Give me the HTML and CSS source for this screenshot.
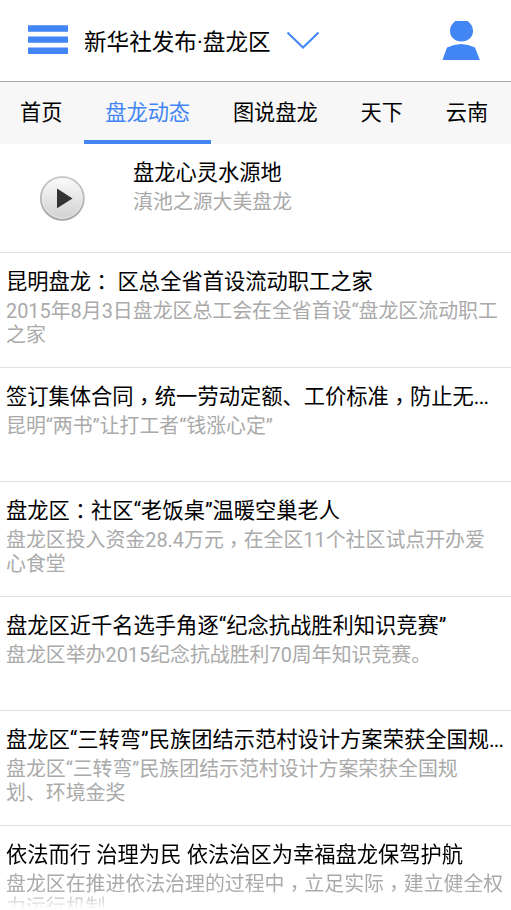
FILE: index.html
```html
<!DOCTYPE html>
<html lang="zh-CN">
<head>
<meta charset="utf-8">
<title>新华社发布·盘龙区</title>
<link rel="stylesheet" href="styles.css">
</head>
<body>
<header class="topbar">
<svg class="menu" width="40" height="29" viewBox="0 0 40 29"><path fill="#4285f4" d="M0 .3h40v6.500H0zM0 11.500h40v6.300H0zM0 22.600h40v6.300H0z"/></svg>
<h1 class="brand">新华社发布·盘龙区</h1>
<svg class="chevron" width="34" height="20" viewBox="0 0 34 20"><path d="M1.500 1.500L17 16.500 32.500 1.500" fill="none" stroke="#4285f4" stroke-width="2"/></svg>
<svg class="user" width="38" height="39" viewBox="0 0 38 39"><path fill="#4285f4" d="M13.500 0h12Q31 4 31 10c0 6-5 10.500-11.500 10.500S8 16 8 10Q8 4 13.500 0zM.5 39L5 26.500Q12 23 19 23t14 3.500L37.800 39z"/></svg>
</header>
<nav class="tabs">
<a class="tab">首页</a><a class="tab active">盘龙动态</a><a class="tab">图说盘龙</a><a class="tab">天下</a><a class="tab">云南</a>
</nav>
<main class="list">
<article class="item media">
<svg class="play" width="46" height="46" viewBox="0 0 46 46"><defs><linearGradient id="face" x2="0" y2="1"><stop stop-color="#fcfcfc"/><stop offset="1" stop-color="#cfcfcf"/></linearGradient><linearGradient id="rim" x2="0" y2="1"><stop stop-color="#c8c8c8"/><stop offset="1" stop-color="#a8a8a8"/></linearGradient></defs><circle cx="23.300" cy="23.300" r="21.500" fill="url(#face)" stroke="url(#rim)" stroke-width="1.800"/><circle cx="23.300" cy="23.300" r="19.800" fill="none" stroke="#eee" stroke-width=".8"/><path fill="#333" d="M18 13.500l15.500 9.900L18 33.300z"/></svg>
<div><h2 class="title">盘龙心灵水源地</h2><p class="desc">滇池之源大美盘龙</p></div>
</article>
<article class="item"><h2 class="title">昆明盘龙<span class="colon" lang="zh-TW">：</span> 区总全省首设流动职工之家</h2><p class="desc">2015年8月3日盘龙区总工会在全省首设“盘龙区流动职工<br>之家</p></article>
<article class="item"><h2 class="title">签订集体合同<span class="comma" lang="zh-TW">，</span>统一劳动定额、工价标准<span class="comma" lang="zh-TW">，</span>防止无<span class="dots">...</span></h2><p class="desc">昆明“两书”让打工者“钱涨心定”</p></article>
<article class="item"><h2 class="title">盘龙区<span class="colon" lang="zh-TW">：</span>社区“老饭桌”温暖空巢老人</h2><p class="desc">盘龙区投入资金28.4万元<span class="comma" lang="zh-TW">，</span>在全区11个社区试点开办爱<br>心食堂</p></article>
<article class="item"><h2 class="title">盘龙区近千名选手角逐“纪念抗战胜利知识竞赛”</h2><p class="desc">盘龙区举办2015纪念抗战胜利70周年知识竞赛。</p></article>
<article class="item"><h2 class="title">盘龙区“三转弯”民族团结示范村设计方案荣获全国规<span class="dots">...</span></h2><p class="desc">盘龙区“三转弯”民族团结示范村设计方案荣获全国规<br>划、环境金奖</p></article>
<article class="item last"><h2 class="title">依法而行 治理为民 依法治区为幸福盘龙保驾护航</h2><p class="desc">盘龙区在推进依法治理的过程中<span class="comma" lang="zh-TW">，</span>立足实际<span class="comma" lang="zh-TW">，</span>建立健全权<br>力运行机制</p></article>
</main>
</body>
</html>
```
FILE: styles.css
```css
* { box-sizing: border-box; margin: 0; padding: 0; }
html, body { height: 910px; overflow: hidden; }
body { background: #fff; font-family: Roboto, "Noto Sans CJK SC", sans-serif; color: #000; }
.topbar { height: 82px; display: flex; align-items: center; padding: 0 31px 0 28px; border-bottom: 1px solid #aaa; }
.menu { margin-top: -2px; }
.brand { font-size: 22.600px; font-weight: 400; line-height: 30px; margin: 4px 0 0 16px; white-space: nowrap; }
.chevron { margin-left: 15px; }
.user { margin-left: auto; }
.tabs { height: 62px; background: #f7f7f7; display: flex; }
.tab { font-size: 21.200px; line-height: 61px; padding: 0 21.450px; height: 62px; white-space: nowrap; flex: none; }
.tab:first-child { padding-left: 20px; }
.active { color: #4285f4; border-bottom: 4.500px solid #4285f4; }
.item { height: 114.500px; padding: 17px 0 0 6px; border-bottom: 1px solid #e0e0e0; }
.media { height: 109px; display: flex; padding: 17px 0 0 39px; }
.play { margin: 14px 48px 0 0; flex: none; }
.title { font-size: 21.280px; font-weight: 400; line-height: 24px; white-space: nowrap; }
.desc { font-size: 19.900px; line-height: 23.800px; color: #aaa; white-space: nowrap; margin-top: 6.200px; }
.colon, .comma { font-family: "Noto Sans CJK TC", sans-serif; line-height: 0; }
.comma { vertical-align: -5px; }
.colon { vertical-align: -1px; }
.dots { letter-spacing: -.8px; }
.last { height: 85px; border-bottom: 0; overflow: hidden; -webkit-mask-image: linear-gradient(#000 64px, transparent 83px); mask-image: linear-gradient(#000 64px, transparent 83px); }
```
